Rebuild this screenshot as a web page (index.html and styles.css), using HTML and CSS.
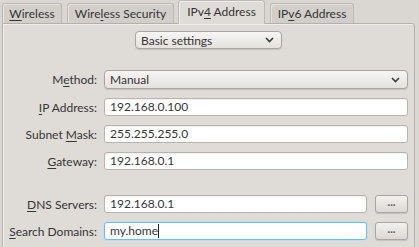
FILE: index.html
```html
<!DOCTYPE html>
<html lang="en">
<head>
    <meta charset="UTF-8">
    <meta name="viewport" content="width=device-width, initial-scale=1.0">
    <title>Editing connection</title>
    <link rel="stylesheet" href="styles.css">
</head>
<body>
    <div class="tabs">
        <div class="tab"><u>W</u>ireless</div>
        <div class="tab">Wire<u>l</u>ess Security</div>
        <div class="tab active">IPv<u>4</u> Address</div>
        <div class="tab">IP<u>v</u>6 Address</div>
    </div>

    <div class="panel">
        <div class="mode">
            <div class="combo small">
                <span>Basic settings</span>
                <svg class="arrow" width="9" height="6" viewBox="0 0 9 6"><path d="M1 1 L4.5 4.5 L8 1" fill="none" stroke="#3a3a3a" stroke-width="1.6"/></svg>
            </div>
        </div>

        <div class="form">
            <label>M<u>e</u>thod:</label>
            <div class="combo">
                <span>Manual</span>
                <svg class="arrow" width="9" height="6" viewBox="0 0 9 6"><path d="M1 1 L4.5 4.5 L8 1" fill="none" stroke="#3a3a3a" stroke-width="1.6"/></svg>
            </div>

            <label><u>I</u>P Address:</label>
            <div class="entry">192.168.0.100</div>

            <label>Subnet <u>M</u>ask:</label>
            <div class="entry">255.255.255.0</div>

            <label><u>G</u>ateway:</label>
            <div class="entry">192.168.0.1</div>

            <div class="spacer"></div>

            <label><u>D</u>NS Servers:</label>
            <div class="field-row">
                <div class="entry">192.168.0.1</div>
                <button class="dots">...</button>
            </div>

            <label><u>S</u>earch Domains:</label>
            <div class="field-row">
                <div class="entry focus">my.home<span class="caret"></span></div>
                <button class="dots">...</button>
            </div>
        </div>
    </div>
</body>
</html>
```

FILE: styles.css
```css
body {
    margin: 0;
    padding: 0;
    background-color: #dad7d3;
    font-family: Lato, "Noto Sans", sans-serif;
    font-size: 12px;
    color: #353535;
    overflow: hidden;
    white-space: nowrap;
}

u {
    text-decoration-thickness: 1px;
    text-underline-offset: 2px;
}

.tabs {
    display: flex;
    align-items: flex-end;
    height: 23px;
    padding-left: 2px;
}

.tab {
    box-sizing: border-box;
    height: 20px;
    line-height: 19px;
    text-align: center;
    margin-right: 5px;
    background: #d2cfcb;
    border: 1px solid #bdb9b4;
    border-bottom: none;
    border-radius: 3px 3px 0 0;
    box-shadow: inset 1px 1px 0 #e6e4e1;
}

.tab:nth-child(1) { width: 60px; }
.tab:nth-child(2) { width: 107px; }
.tab:nth-child(4) { width: 84px; }

.tab.active {
    width: 87px;
    height: 24px;
    line-height: 22px;
    margin: 0 5px -1px -1px;
    background: #dfdcd8;
    position: relative;
    z-index: 1;
    box-shadow: inset 1px 1px 0 #efeeec;
}

.panel {
    box-sizing: border-box;
    width: 413px;
    height: 226px;
    margin-left: 2px;
    background: #dfdcd8;
    border: 1px solid #b4b0ab;
    border-radius: 0 3px 0 0;
    box-shadow: inset 1px 1px 0 #efeeec;
    padding: 7px 6px 0 0;
}

.mode {
    display: flex;
    justify-content: center;
    padding-left: 6px;
    margin-bottom: 21px;
}

.combo {
    box-sizing: border-box;
    height: 19px;
    display: flex;
    align-items: center;
    justify-content: space-between;
    padding: 0 7px 0 5px;
    border: 1px solid #a9a5a0;
    border-radius: 4px;
    background: linear-gradient(#f7f6f5, #e4e1de);
    box-shadow: 0 1px 1px rgba(0, 0, 0, 0.12);
}

.combo.small {
    width: 147px;
    height: 18px;
}

.form {
    display: grid;
    grid-template-columns: 94px 1fr;
    column-gap: 7px;
    row-gap: 9px;
    align-items: center;
}

label {
    text-align: right;
}

.entry {
    box-sizing: border-box;
    height: 18px;
    line-height: 16px;
    padding: 0 5px;
    background: #ffffff;
    border: 1px solid #b7b3ae;
    border-radius: 3px;
    box-shadow: inset 0 1px 1px rgba(0, 0, 0, 0.06);
}

.entry.focus {
    border-color: #6fbde8;
    box-shadow: 0 0 0 1px #b9e0f5;
}

.caret {
    display: inline-block;
    width: 1px;
    height: 14px;
    background: #222;
    vertical-align: -3px;
}

.spacer {
    grid-column: 1 / 3;
    height: 7px;
}

.field-row {
    display: flex;
    align-items: center;
    gap: 8px;
}

.field-row .entry {
    flex: 1;
}

.dots {
    box-sizing: border-box;
    width: 33px;
    height: 18px;
    padding: 0 0 4px;
    font-family: Lato, sans-serif;
    font-size: 11px;
    font-weight: bold;
    color: #555;
    line-height: 10px;
    border: 1px solid #a9a5a0;
    border-radius: 3px;
    background: linear-gradient(#f2f1ef, #dcd9d5);
    box-shadow: 0 1px 1px rgba(0, 0, 0, 0.12);
}
```
